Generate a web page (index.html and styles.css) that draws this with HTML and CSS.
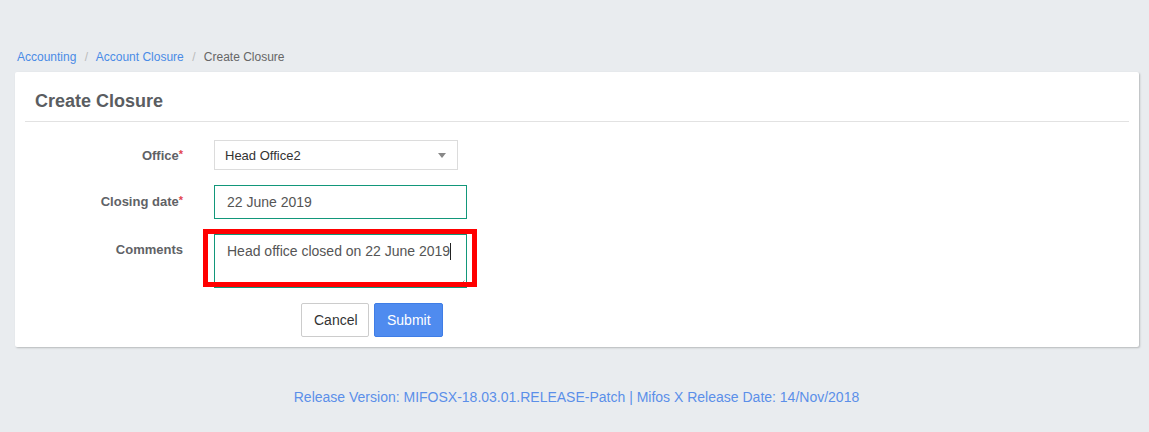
FILE: index.html
```html
<!DOCTYPE html>
<html lang="en">
<head>
<meta charset="utf-8">
<title>Create Closure</title>
<link rel="stylesheet" href="styles.css">
</head>
<body>
<div class="page">
  <nav class="breadcrumb">
    <a href="#" class="crumb-link">Accounting</a>
    <span class="sep">/</span>
    <a href="#" class="crumb-link">Account Closure</a>
    <span class="sep">/</span>
    <span class="crumb-active">Create Closure</span>
  </nav>

  <section class="card">
    <div class="card-header">
      <h2 class="card-title">Create Closure</h2>
    </div>
    <form class="form">
      <div class="form-row">
        <label class="form-label">Office<span class="req">*</span></label>
        <div class="select-box">
          <span class="select-value">Head Office2</span>
          <span class="select-arrow"></span>
        </div>
      </div>
      <div class="form-row">
        <label class="form-label form-label-input">Closing date<span class="req">*</span></label>
        <div class="text-input">22 June 2019</div>
      </div>
      <div class="form-row">
        <label class="form-label">Comments</label>
        <div class="textarea-wrap">
          <div class="textarea">Head office closed on 22 June 2019<span class="caret"></span></div>
          <svg class="resize" width="6" height="6" viewBox="0 0 6 6"><path d="M5.5 0.5 L0.5 5.5 M5.5 3 L3 5.5" stroke="#999" stroke-width="1" fill="none"/></svg>
          <div class="highlight"></div>
        </div>
      </div>
      <div class="actions">
        <button type="button" class="btn btn-default">Cancel</button>
        <button type="button" class="btn btn-primary">Submit</button>
      </div>
    </form>
  </section>

  <footer class="footer">Release Version: MIFOSX-18.03.01.RELEASE-Patch | Mifos X Release Date: 14/Nov/2018</footer>
</div>
</body>
</html>
```

FILE: styles.css
```css
html, body {
  margin: 0;
  padding: 0;
}
body {
  background: #e9ecef;
  font-family: "Liberation Sans", Arial, Helvetica, sans-serif;
  color: #333;
}
.page {
  padding: 49px 10px 0 15px;
}
.breadcrumb {
  font-size: 12px;
  line-height: 17px;
  padding-left: 2px;
  height: 17px;
  margin-bottom: 6px;
}
.crumb-link {
  color: #4a8be6;
  text-decoration: none;
}
.sep {
  color: #bbb;
  padding: 0 5px;
}
.crumb-active {
  color: #666;
}
.card {
  background: #fff;
  border-radius: 2px;
  box-shadow: 1px 1px 2px rgba(0, 0, 0, 0.22);
  padding: 0 10px 10px 10px;
}
.card-header {
  border-bottom: 1px solid #e2e2e2;
  padding: 19px 10px 10px 10px;
}
.card-title {
  margin: 0;
  font-size: 18px;
  line-height: 20px;
  font-weight: bold;
  color: #5a5d61;
}
.form {
  padding-top: 18px;
}
.form-row {
  display: flex;
  align-items: flex-start;
  margin-bottom: 15px;
}
.form-label {
  width: 158px;
  margin-right: 31px;
  text-align: right;
  font-size: 13px;
  line-height: 18px;
  font-weight: bold;
  color: #5f6266;
  padding-top: 7px;
}
.form-label-input {
  padding-top: 8px;
}
.req {
  color: #e2454f;
  font-size: 11px;
  vertical-align: top;
  line-height: 14px;
}
.select-box {
  box-sizing: border-box;
  width: 244px;
  height: 30px;
  border: 1px solid #dcdcdc;
  display: flex;
  align-items: center;
  justify-content: space-between;
  padding: 0 10px 0 10px;
  font-size: 13px;
  color: #333;
}
.select-arrow {
  width: 0;
  height: 0;
  border-left: 4px solid transparent;
  border-right: 4px solid transparent;
  border-top: 5px solid #888;
  margin-right: 1px;
}
.text-input {
  box-sizing: border-box;
  width: 253px;
  height: 34px;
  border: 1px solid #12977a;
  padding: 0 12px;
  font-size: 14px;
  line-height: 32px;
  color: #555;
}
.textarea-wrap {
  position: relative;
  width: 253px;
  height: 54px;
}
.textarea {
  box-sizing: border-box;
  width: 253px;
  height: 54px;
  border: 1px solid #12977a;
  padding: 6px 12px;
  font-size: 14px;
  line-height: 20px;
  color: #555;
}
.caret {
  display: inline-block;
  width: 1px;
  height: 17px;
  background: #222;
  vertical-align: -4px;
}
.resize {
  position: absolute;
  right: 2px;
  bottom: 2px;
}
.highlight {
  position: absolute;
  left: -11px;
  top: -5px;
  width: 274px;
  height: 58px;
  box-sizing: border-box;
  border: 5px solid #ff0000;
  pointer-events: none;
}
.actions {
  display: flex;
  gap: 5px;
  padding-left: 276px;
}
.btn {
  box-sizing: border-box;
  height: 34px;
  font-family: "Liberation Sans", Arial, Helvetica, sans-serif;
  font-size: 14px;
  border-radius: 2px;
  padding: 0 12px;
  cursor: pointer;
}
.btn-default {
  width: 68px;
  background: #fff;
  border: 1px solid #ccc;
  color: #333;
}
.btn-primary {
  width: 69px;
  background: #4f8bef;
  border: 1px solid #3f7de6;
  color: #fff;
}
.footer {
  margin-top: 40px;
  text-align: center;
  font-size: 14px;
  line-height: 20px;
  color: #5b8fe9;
  padding-left: 4px;
  margin-left: -15px;
  margin-right: -10px;
}
```
